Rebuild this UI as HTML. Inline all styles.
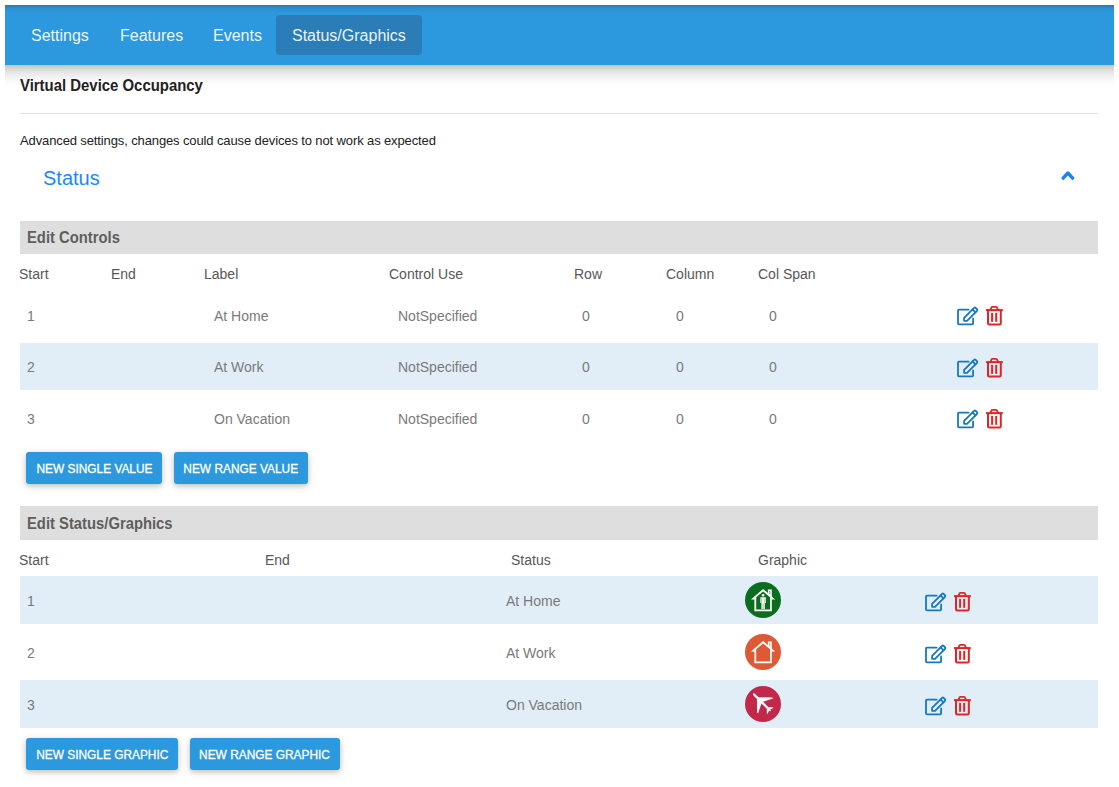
<!DOCTYPE html>
<html><head><meta charset="utf-8">
<style>
html,body{margin:0;padding:0;background:#fff;width:1119px;height:787px;overflow:hidden;position:relative;font-family:"Liberation Sans",sans-serif;}
.a{position:absolute;white-space:nowrap;line-height:1;}
#nav{position:absolute;left:5px;top:5px;width:1109px;height:60px;background:linear-gradient(rgba(0,0,0,.2),rgba(0,0,0,.07) 3px,rgba(0,0,0,0) 8px),#2c99de;}
#shd{position:absolute;left:5px;top:65px;width:1109px;height:24px;background:linear-gradient(rgba(0,0,0,.23),rgba(0,0,0,.15) 4px,rgba(0,0,0,.09) 8px,rgba(0,0,0,.05) 12px,rgba(0,0,0,.022) 16px,rgba(0,0,0,.007) 20px,rgba(0,0,0,0) 24px);}
.tab{position:absolute;top:23px;font-size:16px;color:rgba(255,255,255,.93);}
#act{position:absolute;left:271px;top:10px;width:146px;height:40px;background:#2a7db6;border-radius:4px;}
.hr{position:absolute;left:20px;width:1078px;height:1px;background:#e2e2e2;}
.bar{position:absolute;left:20px;width:1078px;background:#dedede;}
.bt{font-size:16px;font-weight:bold;color:#5e5e5e;transform:scaleX(.925);transform-origin:0 0;}
.th{font-size:14px;color:#575757;}
.td{font-size:14px;color:#7a7a7a;}
.hl{position:absolute;left:20px;width:1078px;height:48px;background:#e1eef8;}
.btn span{display:inline-block;transform:scaleX(.915);}
.btn{position:absolute;height:32px;background:#2c99de;border-radius:3px;color:#fff;font-size:13px;font-weight:normal;line-height:33px;text-align:center;-webkit-text-stroke:0.3px #fff;
 box-shadow:0 2px 5px rgba(0,0,0,.16),0 2px 10px rgba(0,0,0,.12);}
svg{position:absolute;overflow:visible;}
</style></head><body>

<div id="shd"></div>
<div id="nav">
  <div id="act"></div>
  <div class="a tab" style="left:26px">Settings</div>
  <div class="a tab" style="left:115px">Features</div>
  <div class="a tab" style="left:208px">Events</div>
  <div class="a tab" style="left:287px">Status/Graphics</div>
</div>

<div class="a" style="left:20px;top:78px;font-size:16px;font-weight:bold;color:#222;transform:scaleX(.932);transform-origin:0 0">Virtual Device Occupancy</div>
<div class="hr" style="top:113px"></div>
<div class="a" style="left:20px;top:134px;font-size:13px;color:#222;letter-spacing:-0.12px">Advanced settings, changes could cause devices to not work as expected</div>
<div class="a" style="left:43px;top:168px;font-size:20px;color:#1a88f8">Status</div>
<svg style="left:1058px;top:168px" width="20" height="16" viewBox="0 0 20 16"><path d="M5.1 10.1 L9.9 5 L14.6 10.1" fill="none" stroke="#1a84ee" stroke-width="3.4" stroke-linecap="round" stroke-linejoin="round"/></svg>

<!-- Edit Controls -->
<div class="bar" style="top:221px;height:33px"></div>
<div class="a bt" style="left:27px;top:230px">Edit Controls</div>
<div class="a th" style="left:19px;top:267px">Start</div>
<div class="a th" style="left:111px;top:267px">End</div>
<div class="a th" style="left:204px;top:267px">Label</div>
<div class="a th" style="left:389px;top:267px">Control Use</div>
<div class="a th" style="left:574px;top:267px">Row</div>
<div class="a th" style="left:666px;top:267px">Column</div>
<div class="a th" style="left:758px;top:267px">Col Span</div>

<div class="hl" style="top:343px;height:47px"></div>
<!--R1-->
<div class="a td" style="left:27px;top:309px">1</div>
<div class="a td" style="left:214px;top:309px">At Home</div>
<div class="a td" style="left:398px;top:309px">NotSpecified</div>
<div class="a td" style="left:582px;top:309px">0</div>
<div class="a td" style="left:676px;top:309px">0</div>
<div class="a td" style="left:769px;top:309px">0</div>
<svg style="left:954px;top:302px" width="28" height="26" viewBox="0 0 28 26"><g fill="none" stroke="#1778c0" stroke-width="1.8" stroke-linejoin="round" stroke-linecap="round"><path d="M14.6 7.7H4.9Q4 7.7 4 8.6V21.5Q4 22.4 4.9 22.4H18.2Q19.1 22.4 19.1 21.5V16.4"/><g transform="translate(10.1 18.8) rotate(-45)"><path d="M0 0L2.05 -2.05H16.2Q17.3 -2.05 17.3 -0.95V0.95Q17.3 2.05 16.2 2.05H2.05Z"/><path d="M14 -2.05V2.05"/></g></g></svg>
<svg style="left:982px;top:302px" width="26" height="26" viewBox="0 0 26 26"><g fill="#e32424"><rect x="4" y="7.1" width="16.8" height="2"/><rect x="9.1" y="10.9" width="2" height="8.9"/><rect x="13.2" y="10.9" width="2" height="8.9"/></g><g fill="none" stroke="#e32424"><path stroke-width="1.8" d="M8.2 8.2L9.5 5.4Q9.8 4.9 10.5 4.9H13.9Q14.6 4.9 14.9 5.4L16.2 8.2"/><path stroke-width="2" d="M6 9V21.3Q6 22.5 7.2 22.5H17.6Q18.8 22.5 18.8 21.3V9"/></g></svg>
<div class="a td" style="left:27px;top:360px">2</div>
<div class="a td" style="left:214px;top:360px">At Work</div>
<div class="a td" style="left:398px;top:360px">NotSpecified</div>
<div class="a td" style="left:582px;top:360px">0</div>
<div class="a td" style="left:676px;top:360px">0</div>
<div class="a td" style="left:769px;top:360px">0</div>
<svg style="left:954px;top:354px" width="28" height="26" viewBox="0 0 28 26"><g fill="none" stroke="#1778c0" stroke-width="1.8" stroke-linejoin="round" stroke-linecap="round"><path d="M14.6 7.7H4.9Q4 7.7 4 8.6V21.5Q4 22.4 4.9 22.4H18.2Q19.1 22.4 19.1 21.5V16.4"/><g transform="translate(10.1 18.8) rotate(-45)"><path d="M0 0L2.05 -2.05H16.2Q17.3 -2.05 17.3 -0.95V0.95Q17.3 2.05 16.2 2.05H2.05Z"/><path d="M14 -2.05V2.05"/></g></g></svg>
<svg style="left:982px;top:354px" width="26" height="26" viewBox="0 0 26 26"><g fill="#e32424"><rect x="4" y="7.1" width="16.8" height="2"/><rect x="9.1" y="10.9" width="2" height="8.9"/><rect x="13.2" y="10.9" width="2" height="8.9"/></g><g fill="none" stroke="#e32424"><path stroke-width="1.8" d="M8.2 8.2L9.5 5.4Q9.8 4.9 10.5 4.9H13.9Q14.6 4.9 14.9 5.4L16.2 8.2"/><path stroke-width="2" d="M6 9V21.3Q6 22.5 7.2 22.5H17.6Q18.8 22.5 18.8 21.3V9"/></g></svg>
<div class="a td" style="left:27px;top:412px">3</div>
<div class="a td" style="left:214px;top:412px">On Vacation</div>
<div class="a td" style="left:398px;top:412px">NotSpecified</div>
<div class="a td" style="left:582px;top:412px">0</div>
<div class="a td" style="left:676px;top:412px">0</div>
<div class="a td" style="left:769px;top:412px">0</div>
<svg style="left:954px;top:405px" width="28" height="26" viewBox="0 0 28 26"><g fill="none" stroke="#1778c0" stroke-width="1.8" stroke-linejoin="round" stroke-linecap="round"><path d="M14.6 7.7H4.9Q4 7.7 4 8.6V21.5Q4 22.4 4.9 22.4H18.2Q19.1 22.4 19.1 21.5V16.4"/><g transform="translate(10.1 18.8) rotate(-45)"><path d="M0 0L2.05 -2.05H16.2Q17.3 -2.05 17.3 -0.95V0.95Q17.3 2.05 16.2 2.05H2.05Z"/><path d="M14 -2.05V2.05"/></g></g></svg>
<svg style="left:982px;top:405px" width="26" height="26" viewBox="0 0 26 26"><g fill="#e32424"><rect x="4" y="7.1" width="16.8" height="2"/><rect x="9.1" y="10.9" width="2" height="8.9"/><rect x="13.2" y="10.9" width="2" height="8.9"/></g><g fill="none" stroke="#e32424"><path stroke-width="1.8" d="M8.2 8.2L9.5 5.4Q9.8 4.9 10.5 4.9H13.9Q14.6 4.9 14.9 5.4L16.2 8.2"/><path stroke-width="2" d="M6 9V21.3Q6 22.5 7.2 22.5H17.6Q18.8 22.5 18.8 21.3V9"/></g></svg>
<!--/R1-->

<div class="btn" style="left:26px;top:452px;width:136px"><span>NEW SINGLE VALUE</span></div>
<div class="btn" style="left:174px;top:452px;width:134px"><span>NEW RANGE VALUE</span></div>

<!-- Edit Status/Graphics -->
<div class="bar" style="top:506px;height:34px"></div>
<div class="a bt" style="left:27px;top:516px">Edit Status/Graphics</div>
<div class="a th" style="left:19px;top:553px">Start</div>
<div class="a th" style="left:265px;top:553px">End</div>
<div class="a th" style="left:511px;top:553px">Status</div>
<div class="a th" style="left:758px;top:553px">Graphic</div>

<div class="hl" style="top:576px"></div>
<div class="hl" style="top:680px"></div>
<!--R2-->
<div class="a td" style="left:27px;top:594px">1</div>
<div class="a td" style="left:506px;top:594px">At Home</div>
<svg style="left:745px;top:582px" width="36" height="36" viewBox="0 0 36 36"><circle cx="18" cy="18" r="18" fill="#0b6e1e"/><path fill="#fff" fill-rule="evenodd" d="M5.9 17.6L18.1 6.9L22.9 11.1V7.5H26.8V14.6L30.2 17.6H26.8V29.3H9.4V17.6ZM11.2 15.3L18.1 9.6L25.1 15.3V27.4H11.2ZM24.5 9H25.2V12.6L24.5 12Z"/><g fill="#fff"><circle cx="18.1" cy="13.3" r="1.3"/><path d="M15.9 15.2H20.3Q20.9 15.2 20.9 15.8V20.9H19.8V27H16.4V20.9H15.3V15.8Q15.3 15.2 15.9 15.2Z"/></g><g stroke="#0b6e1e" stroke-width="0.4"><path d="M16.4 16.5V20.9M19.8 16.5V20.9M18.1 21.5V27"/></g></svg>
<svg style="left:922px;top:588px" width="28" height="26" viewBox="0 0 28 26"><g fill="none" stroke="#1778c0" stroke-width="1.8" stroke-linejoin="round" stroke-linecap="round"><path d="M14.6 7.7H4.9Q4 7.7 4 8.6V21.5Q4 22.4 4.9 22.4H18.2Q19.1 22.4 19.1 21.5V16.4"/><g transform="translate(10.1 18.8) rotate(-45)"><path d="M0 0L2.05 -2.05H16.2Q17.3 -2.05 17.3 -0.95V0.95Q17.3 2.05 16.2 2.05H2.05Z"/><path d="M14 -2.05V2.05"/></g></g></svg>
<svg style="left:950px;top:588px" width="26" height="26" viewBox="0 0 26 26"><g fill="#e32424"><rect x="4" y="7.1" width="16.8" height="2"/><rect x="9.1" y="10.9" width="2" height="8.9"/><rect x="13.2" y="10.9" width="2" height="8.9"/></g><g fill="none" stroke="#e32424"><path stroke-width="1.8" d="M8.2 8.2L9.5 5.4Q9.8 4.9 10.5 4.9H13.9Q14.6 4.9 14.9 5.4L16.2 8.2"/><path stroke-width="2" d="M6 9V21.3Q6 22.5 7.2 22.5H17.6Q18.8 22.5 18.8 21.3V9"/></g></svg>
<div class="a td" style="left:27px;top:646px">2</div>
<div class="a td" style="left:506px;top:646px">At Work</div>
<svg style="left:745px;top:634px" width="36" height="36" viewBox="0 0 36 36"><circle cx="18" cy="18" r="18" fill="#de5a37"/><path fill="#fff" fill-rule="evenodd" d="M5.9 17.6L18.1 6.9L22.9 11.1V7.5H26.8V14.6L30.2 17.6H26.8V29.3H9.4V17.6ZM11.2 15.3L18.1 9.6L25.1 15.3V27.4H11.2ZM24.5 9H25.2V12.6L24.5 12Z"/></svg>
<svg style="left:922px;top:640px" width="28" height="26" viewBox="0 0 28 26"><g fill="none" stroke="#1778c0" stroke-width="1.8" stroke-linejoin="round" stroke-linecap="round"><path d="M14.6 7.7H4.9Q4 7.7 4 8.6V21.5Q4 22.4 4.9 22.4H18.2Q19.1 22.4 19.1 21.5V16.4"/><g transform="translate(10.1 18.8) rotate(-45)"><path d="M0 0L2.05 -2.05H16.2Q17.3 -2.05 17.3 -0.95V0.95Q17.3 2.05 16.2 2.05H2.05Z"/><path d="M14 -2.05V2.05"/></g></g></svg>
<svg style="left:950px;top:640px" width="26" height="26" viewBox="0 0 26 26"><g fill="#e32424"><rect x="4" y="7.1" width="16.8" height="2"/><rect x="9.1" y="10.9" width="2" height="8.9"/><rect x="13.2" y="10.9" width="2" height="8.9"/></g><g fill="none" stroke="#e32424"><path stroke-width="1.8" d="M8.2 8.2L9.5 5.4Q9.8 4.9 10.5 4.9H13.9Q14.6 4.9 14.9 5.4L16.2 8.2"/><path stroke-width="2" d="M6 9V21.3Q6 22.5 7.2 22.5H17.6Q18.8 22.5 18.8 21.3V9"/></g></svg>
<div class="a td" style="left:27px;top:698px">3</div>
<div class="a td" style="left:506px;top:698px">On Vacation</div>
<svg style="left:745px;top:686px" width="36" height="36" viewBox="0 0 36 36"><circle cx="18" cy="18" r="18" fill="#c1284a"/><g transform="translate(8.2 7.6) rotate(45)"><path fill="#fff" d="M0 0Q0.3 -1.1 1.5 -1.1H6.4L16.3 -10.9L17.4 -10.5L12.8 -1.1H20.4L23.6 -4.4L24.5 -4L23.2 -0.8Q24.7 -0.5 25 0Q24.7 0.5 23.2 0.8L24.5 4L23.6 4.4L20.4 1.1H12.8L17.4 10.5L16.3 10.9L6.4 1.1H1.5Q0.3 1.1 0 0Z"/></g></svg>
<svg style="left:922px;top:692px" width="28" height="26" viewBox="0 0 28 26"><g fill="none" stroke="#1778c0" stroke-width="1.8" stroke-linejoin="round" stroke-linecap="round"><path d="M14.6 7.7H4.9Q4 7.7 4 8.6V21.5Q4 22.4 4.9 22.4H18.2Q19.1 22.4 19.1 21.5V16.4"/><g transform="translate(10.1 18.8) rotate(-45)"><path d="M0 0L2.05 -2.05H16.2Q17.3 -2.05 17.3 -0.95V0.95Q17.3 2.05 16.2 2.05H2.05Z"/><path d="M14 -2.05V2.05"/></g></g></svg>
<svg style="left:950px;top:692px" width="26" height="26" viewBox="0 0 26 26"><g fill="#e32424"><rect x="4" y="7.1" width="16.8" height="2"/><rect x="9.1" y="10.9" width="2" height="8.9"/><rect x="13.2" y="10.9" width="2" height="8.9"/></g><g fill="none" stroke="#e32424"><path stroke-width="1.8" d="M8.2 8.2L9.5 5.4Q9.8 4.9 10.5 4.9H13.9Q14.6 4.9 14.9 5.4L16.2 8.2"/><path stroke-width="2" d="M6 9V21.3Q6 22.5 7.2 22.5H17.6Q18.8 22.5 18.8 21.3V9"/></g></svg>
<!--/R2-->

<div class="btn" style="left:26px;top:738px;width:152px"><span>NEW SINGLE GRAPHIC</span></div>
<div class="btn" style="left:190px;top:738px;width:150px"><span>NEW RANGE GRAPHIC</span></div>

</body></html>
